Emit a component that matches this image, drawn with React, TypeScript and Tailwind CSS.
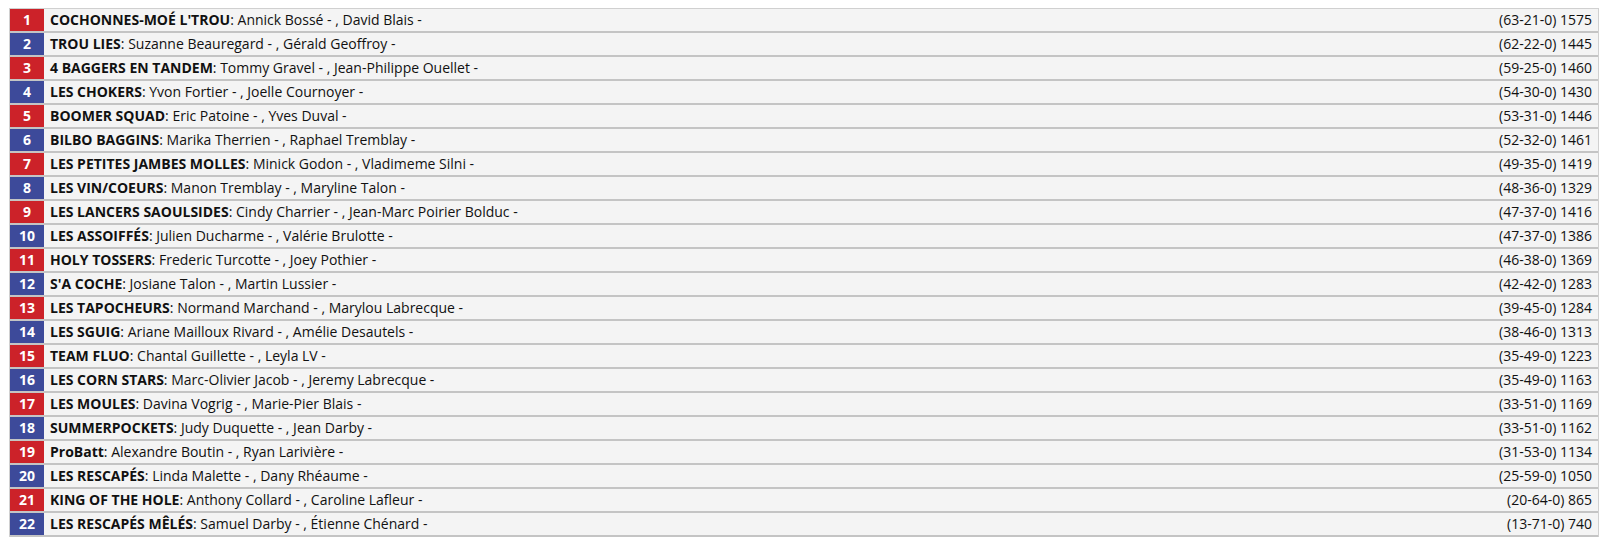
import React from "react";

const rows: [string, string, string][] = [
  ["COCHONNES-MOÉ L'TROU", "Annick Bossé - , David Blais -", "(63-21-0) 1575"],
  ["TROU LIES", "Suzanne Beauregard - , Gérald Geoffroy -", "(62-22-0) 1445"],
  ["4 BAGGERS EN TANDEM", "Tommy Gravel - , Jean-Philippe Ouellet -", "(59-25-0) 1460"],
  ["LES CHOKERS", "Yvon Fortier - , Joelle Cournoyer -", "(54-30-0) 1430"],
  ["BOOMER SQUAD", "Eric Patoine - , Yves Duval -", "(53-31-0) 1446"],
  ["BILBO BAGGINS", "Marika Therrien - , Raphael Tremblay -", "(52-32-0) 1461"],
  ["LES PETITES JAMBES MOLLES", "Minick Godon - , Vladimeme Silni -", "(49-35-0) 1419"],
  ["LES VIN/COEURS", "Manon Tremblay - , Maryline Talon -", "(48-36-0) 1329"],
  ["LES LANCERS SAOULSIDES", "Cindy Charrier - , Jean-Marc Poirier Bolduc -", "(47-37-0) 1416"],
  ["LES ASSOIFFÉS", "Julien Ducharme - , Valérie Brulotte -", "(47-37-0) 1386"],
  ["HOLY TOSSERS", "Frederic Turcotte - , Joey Pothier -", "(46-38-0) 1369"],
  ["S'A COCHE", "Josiane Talon - , Martin Lussier -", "(42-42-0) 1283"],
  ["LES TAPOCHEURS", "Normand Marchand - , Marylou Labrecque -", "(39-45-0) 1284"],
  ["LES SGUIG", "Ariane Mailloux Rivard - , Amélie Desautels -", "(38-46-0) 1313"],
  ["TEAM FLUO", "Chantal Guillette - , Leyla LV -", "(35-49-0) 1223"],
  ["LES CORN STARS", "Marc-Olivier Jacob - , Jeremy Labrecque -", "(35-49-0) 1163"],
  ["LES MOULES", "Davina Vogrig - , Marie-Pier Blais -", "(33-51-0) 1169"],
  ["SUMMERPOCKETS", "Judy Duquette - , Jean Darby -", "(33-51-0) 1162"],
  ["ProBatt", "Alexandre Boutin - , Ryan Larivière -", "(31-53-0) 1134"],
  ["LES RESCAPÉS", "Linda Malette - , Dany Rhéaume -", "(25-59-0) 1050"],
  ["KING OF THE HOLE", "Anthony Collard - , Caroline Lafleur -", "(20-64-0) 865"],
  ["LES RESCAPÉS MÊLÉS", "Samuel Darby - , Étienne Chénard -", "(13-71-0) 740"],
];

export default function App() {
  return (
    <div
      className="w-[1610px] h-[545px] bg-white pt-[8px] pl-[9px] pr-[11px]"
      style={{ fontFamily: '"Open Sans", "Noto Sans", sans-serif' }}
    >
      <div className="flex flex-col border-t border-l border-r border-[#d0d0d0]">
        {rows.map(([team, players, score], i) => (
          <div
            key={i}
            className="flex h-[24px] border-b-2 border-[#c4c4c4] bg-[#f4f4f4] text-[14px] text-[#111] leading-[22px]"
          >
            <div
              className={
                "w-[34px] shrink-0 text-center font-bold text-white " +
                (i % 2 === 0 ? "bg-[#cc2229]" : "bg-[#3d4a9a]")
              }
            >
              {i + 1}
            </div>
            <div className="flex-1 pl-[6px] whitespace-nowrap">
              <span className="font-bold">{team}</span>: {players}
            </div>
            <div className="pr-[6px] whitespace-nowrap">{score}</div>
          </div>
        ))}
      </div>
    </div>
  );
}
